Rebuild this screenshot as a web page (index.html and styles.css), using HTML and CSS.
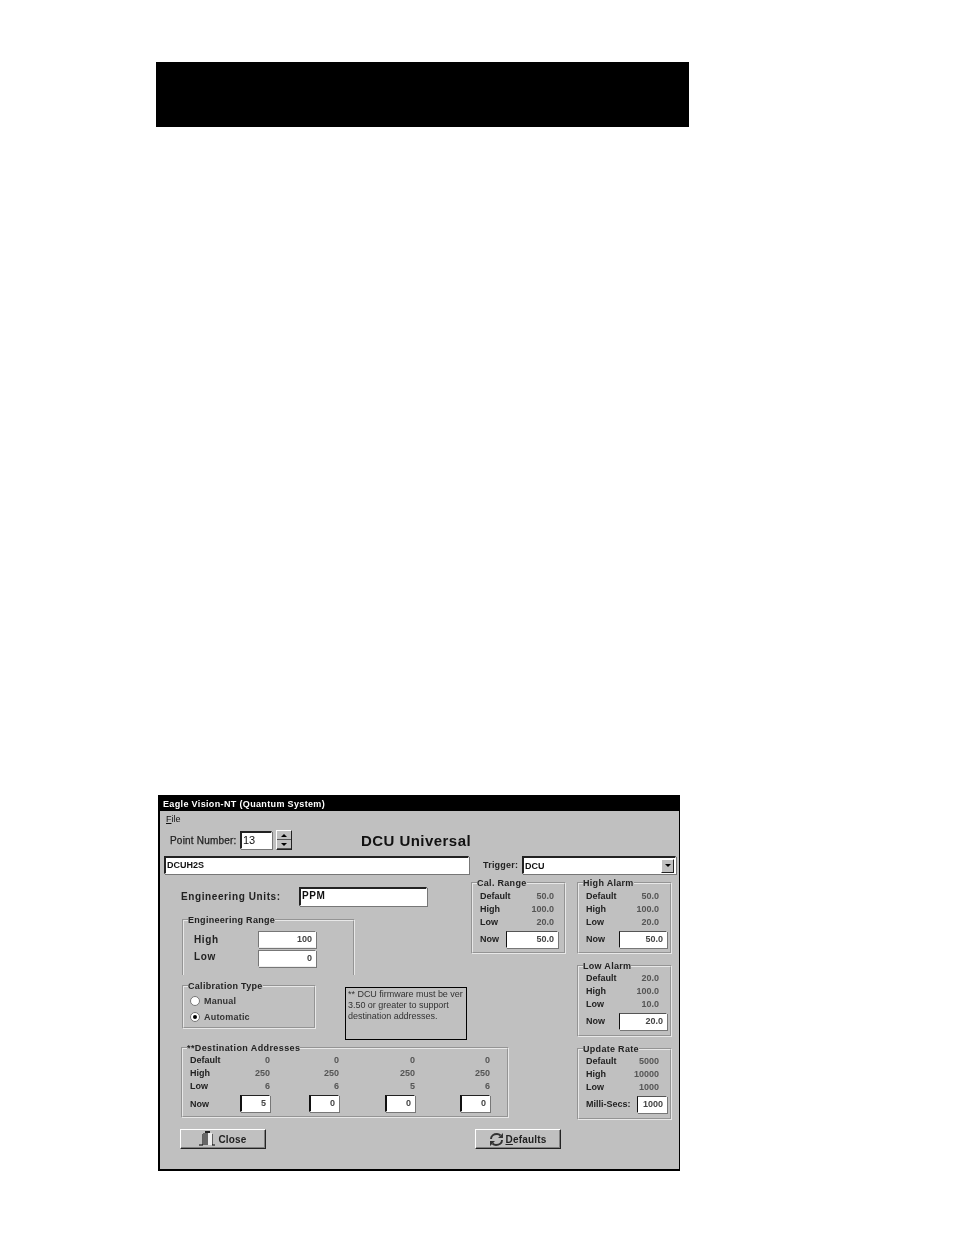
FILE: index.html
```html
<!DOCTYPE html>
<html lang="en">
<head>
    <meta charset="UTF-8">
    <title>Eagle Vision-NT (Quantum System)</title>
    <link rel="stylesheet" href="styles.css">
</head>
<body>
    <div class="page-header"></div>

    <div class="window">
        <div class="title-bar">Eagle Vision-NT (Quantum System)</div>
        <div class="menu-bar"><u>F</u>ile</div>

        <div class="form">
            <!-- Point number and heading -->
            <div class="point-row">
                <span class="label point-label">Point Number:</span>
                <div class="input point-input">13</div>
                <div class="spinner">
                    <div class="spin-btn"><span class="arrow-up"></span></div>
                    <div class="spin-btn"><span class="arrow-down"></span></div>
                </div>
                <h1 class="heading">DCU Universal</h1>
            </div>

            <div class="name-row">
                <div class="input name-input">DCUH2S</div>
                <span class="label trigger-label">Trigger:</span>
                <div class="input trigger-select">
                    <span>DCU</span>
                    <div class="drop-btn"><span class="arrow-down"></span></div>
                </div>
            </div>

            <div class="columns">
                <div class="left-group">
                    <div class="top-part">
                        <div class="left-col">
                            <div class="units-row">
                                <span class="label big units-label">Engineering Units:</span>
                                <div class="input units-input">PPM</div>
                            </div>

                            <fieldset class="box range-box">
                                <legend>Engineering Range</legend>
                                <div class="range-row">
                                    <span class="label big">High</span>
                                    <div class="input num range-input">100</div>
                                </div>
                                <div class="range-row">
                                    <span class="label big">Low</span>
                                    <div class="input num range-input">0</div>
                                </div>
                            </fieldset>

                            <div class="cal-row">
                                <fieldset class="box cal-box">
                                    <legend>Calibration Type</legend>
                                    <div class="radio-row"><span class="radio"></span>Manual</div>
                                    <div class="radio-row"><span class="radio on"></span>Automatic</div>
                                </fieldset>
                                <div class="note">** DCU firmware must be ver 3.50 or greater to support destination addresses.</div>
                            </div>
                        </div>

                        <fieldset class="box stat-box cal-range">
                            <legend>Cal. Range</legend>
                            <div class="stat"><b>Default</b><span>50.0</span></div>
                            <div class="stat"><b>High</b><span>100.0</span></div>
                            <div class="stat"><b>Low</b><span>20.0</span></div>
                            <div class="stat now"><b>Now</b><div class="input num">50.0</div></div>
                        </fieldset>
                    </div>

                    <fieldset class="box dest-box">
                        <legend>**Destination Addresses</legend>
                        <div class="dest-grid">
                            <b>Default</b><span>0</span><span>0</span><span>0</span><span>0</span>
                            <b>High</b><span>250</span><span>250</span><span>250</span><span>250</span>
                            <b>Low</b><span>6</span><span>6</span><span>5</span><span>6</span>
                            <b class="dest-now">Now</b>
                            <div class="input num">5</div>
                            <div class="input num">0</div>
                            <div class="input num">0</div>
                            <div class="input num">0</div>
                        </div>
                    </fieldset>
                </div>

                <div class="right-col">
                    <fieldset class="box stat-box">
                        <legend>High Alarm</legend>
                        <div class="stat"><b>Default</b><span>50.0</span></div>
                        <div class="stat"><b>High</b><span>100.0</span></div>
                        <div class="stat"><b>Low</b><span>20.0</span></div>
                        <div class="stat now"><b>Now</b><div class="input num">50.0</div></div>
                    </fieldset>
                    <fieldset class="box stat-box">
                        <legend>Low Alarm</legend>
                        <div class="stat"><b>Default</b><span>20.0</span></div>
                        <div class="stat"><b>High</b><span>100.0</span></div>
                        <div class="stat"><b>Low</b><span>10.0</span></div>
                        <div class="stat now"><b>Now</b><div class="input num">20.0</div></div>
                    </fieldset>
                    <fieldset class="box stat-box">
                        <legend>Update Rate</legend>
                        <div class="stat"><b>Default</b><span>5000</span></div>
                        <div class="stat"><b>High</b><span>10000</span></div>
                        <div class="stat"><b>Low</b><span>1000</span></div>
                        <div class="stat now"><b>Milli-Secs:</b><div class="input num short">1000</div></div>
                    </fieldset>
                </div>
            </div>

            <div class="button-row">
                <div class="button close-btn">
                    <svg width="16" height="17" viewBox="0 0 16 17">
                        <path d="M13 3v11h3M4 3v11H0" fill="none" stroke="#000" stroke-width="1"/>
                        <path d="M6 0h5v2H6z" fill="#222"/>
                        <rect x="4" y="2" width="5" height="12" fill="#666"/>
                        <rect x="9" y="2" width="4" height="12" fill="#eee"/>
                    </svg>
                    <span>Close</span>
                </div>
                <div class="button defaults-btn">
                    <svg width="15" height="15" viewBox="0 0 15 15">
                        <path d="M2 7C2 3.500 5 2 8 2c1.500 0 2.500.5 3.500 1.500" fill="none" stroke="#333" stroke-width="2"/>
                        <path d="M13 8c0 3.500-3 5-6 5-1.500 0-2.500-.5-3.500-1.500" fill="none" stroke="#333" stroke-width="2"/>
                        <path d="M14 1v5H9zM1 14V9h5z" fill="#333"/>
                    </svg>
                    <span><u>D</u>efaults</span>
                </div>
            </div>
        </div>
    </div>
</body>
</html>
```

FILE: styles.css
```css
* {
    box-sizing: border-box;
}

body {
    margin: 0;
    background: #fff;
    font-family: 'Liberation Sans', Arial, sans-serif;
    font-size: 9px;
    color: #111;
}

.page-header {
    width: 533px;
    height: 65px;
    margin: 62px 0 0 156px;
    background: #000;
}

.window {
    width: 522px;
    height: 376px;
    margin: 668px 0 0 158px;
    border: 2px solid #000;
    border-right-width: 1px;
    background: #c0c0c0;
    filter: blur(0.35px);
}

.title-bar {
    height: 14px;
    padding: 1px 0 0 3px;
    background: #000;
    color: #fff;
    font-weight: bold;
    letter-spacing: 0.35px;
    line-height: 13px;
}

.menu-bar {
    height: 19px;
    padding: 3px 0 0 6px;
    line-height: 11px;
}

.form {
    padding-left: 4px;
}

.label {
    font-weight: bold;
    letter-spacing: 0.2px;
    color: #222;
}

.big {
    font-size: 10px;
    letter-spacing: 0.6px;
}

.input {
    background: #fff;
    border: 1px solid #fff;
    border-top: 2px solid #222;
    border-left: 2px solid #222;
    box-shadow: 1px 1px 0 #777;
    font-weight: bold;
    line-height: 14px;
    white-space: nowrap;
    overflow: hidden;
}

.num {
    padding-right: 3px;
    border-top: 1px solid #555;
    border-left: 1px solid #111;
    text-align: right;
    color: #444;
}

.point-row {
    display: flex;
    align-items: center;
    height: 20px;
    padding-left: 6px;
}

.point-label {
    width: 70px;
    font-size: 10px;
    font-weight: normal;
    letter-spacing: 0.2px;
    -webkit-text-stroke: 0.25px #222;
}

.point-input {
    width: 32px;
    height: 18px;
    padding-left: 1px;
    font-size: 11px;
    font-weight: normal;
}

.spinner {
    display: flex;
    flex-direction: column;
    width: 16px;
    height: 20px;
    margin-left: 4px;
    border: 1px solid #222;
    border-top-color: #fff;
    border-left-color: #fff;
}

.spin-btn {
    flex: 1;
    display: flex;
    align-items: center;
    justify-content: center;
    border-bottom: 1px solid #555;
}

.arrow-up,
.arrow-down {
    width: 0;
    height: 0;
    border-left: 3px solid transparent;
    border-right: 3px solid transparent;
}

.arrow-up {
    border-bottom: 3px solid #000;
}

.arrow-down {
    border-top: 3px solid #000;
}

.heading {
    margin: 2px 0 0 69px;
    font-size: 15px;
    line-height: 20px;
    font-weight: bold;
    letter-spacing: 0.45px;
}

.name-row {
    display: flex;
    align-items: center;
    height: 18px;
    margin-top: 6px;
}

.name-input {
    width: 305px;
    height: 18px;
    padding-left: 1px;
}

.trigger-label {
    width: 39px;
    margin-left: 14px;
}

.trigger-select {
    display: flex;
    align-items: center;
    justify-content: space-between;
    width: 154px;
    height: 18px;
    padding-left: 1px;
}

.drop-btn {
    display: flex;
    align-items: center;
    justify-content: center;
    width: 13px;
    height: 14px;
    margin-right: 1px;
    background: #c0c0c0;
    border: 1px solid #222;
    border-top-color: #fff;
    border-left-color: #fff;
}

.columns {
    display: flex;
    gap: 11px;
    margin-top: 4px;
}

.left-group {
    width: 402px;
}

.top-part {
    display: flex;
    height: 163px;
}

.left-col {
    width: 307px;
    padding: 9px 0 0 17px;
}

.right-col {
    display: flex;
    flex-direction: column;
    gap: 7px;
    width: 95px;
}

/* group boxes, legend sits on the groove */
.box {
    margin: 0;
    padding: 0;
    min-width: 0;
    border: 2px groove #e8e8e8;
}

.box legend {
    margin-left: -3px;
    padding: 0;
    font-size: 9px;
    line-height: 10px;
    font-weight: bold;
    color: #222;
    letter-spacing: 0.3px;
}

.units-row {
    display: flex;
    align-items: center;
    height: 19px;
}

.units-label {
    width: 118px;
}

.units-input {
    width: 128px;
    height: 19px;
    padding-left: 1px;
    font-size: 10px;
    letter-spacing: 0.6px;
}

.range-box {
    width: 173px;
    height: 60px;
    margin: 9px 0 0 1px;
    padding: 6px 0 0 10px;
    border-bottom: none;
}

.range-box legend {
    margin-left: -6px;
}

.range-row {
    display: flex;
    align-items: center;
    height: 17px;
    margin-bottom: 2px;
}

.range-row .label {
    width: 64px;
}

.range-row + .range-row .label {
    margin-top: -4px;
}

.range-input {
    width: 58px;
    height: 17px;
    border-color: #fff #fff #eee #777;
    border-top-color: #777;
}

.cal-row {
    display: flex;
    height: 59px;
    margin: 6px 0 0 1px;
}

.cal-box {
    width: 134px;
    height: 48px;
    padding: 2px 0 0 6px;
}

.cal-box legend {
    margin-left: -2px;
}

.radio-row {
    display: flex;
    align-items: center;
    gap: 4px;
    height: 16px;
    font-weight: bold;
    letter-spacing: 0.2px;
    color: #333;
}

.radio {
    position: relative;
    width: 10px;
    height: 10px;
    background: #fff;
    border: 1px solid #777;
    border-radius: 50%;
}

.radio.on::after {
    content: "";
    position: absolute;
    top: 2px;
    left: 2px;
    width: 4px;
    height: 4px;
    background: #000;
    border-radius: 50%;
}

.note {
    width: 122px;
    height: 53px;
    margin: 6px 0 0 29px;
    padding: 1px 2px;
    border: 1px solid #000;
    font-size: 9px;
    line-height: 11px;
    letter-spacing: -0.03px;
    color: #333;
}

.stat-box {
    width: 95px;
    height: 76px;
    padding: 2px 3px 0 7px;
}

.stat-box + .stat-box {
    padding-top: 1px;
}

.stat {
    display: flex;
    justify-content: space-between;
    height: 13px;
    padding-right: 8px;
    line-height: 13px;
    color: #555;
    font-weight: bold;
}

.stat b {
    color: #222;
}

.stat.now {
    align-items: center;
    height: 17px;
    margin-top: 2px;
    padding-right: 0;
}

.stat.now .input {
    width: 48px;
    height: 17px;
}

.stat.now .short {
    width: 30px;
}

.cal-range .stat {
    padding-right: 7px;
}

.cal-range .stat.now {
    padding-right: 3px;
}

.cal-range .stat.now .input {
    width: 52px;
}

.dest-box {
    width: 328px;
    height: 75px;
    margin: 2px 0 0 17px;
    padding: 1px 0 0 7px;
}

.dest-box legend {
    letter-spacing: 0.4px;
}

.dest-grid {
    display: grid;
    grid-template-columns: 50px 30px 69px 76px 75px;
    grid-auto-rows: 13px;
    line-height: 13px;
    font-weight: bold;
    color: #555;
    text-align: right;
}

.dest-grid b {
    color: #222;
    text-align: left;
}

.dest-grid .input {
    width: 30px;
    height: 17px;
    margin-top: 2px;
    justify-self: end;
    border-top-color: #222;
    border-left-width: 2px;
}

.dest-now {
    margin-top: 3px;
    line-height: 17px;
}

.button-row {
    display: flex;
    margin: 9px 0 0 16px;
}

.button {
    display: flex;
    align-items: center;
    justify-content: center;
    gap: 3px;
    width: 86px;
    height: 20px;
    border: 1px solid #222;
    border-top-color: #fff;
    border-left-color: #fff;
    box-shadow: inset -1px -1px 0 #808080;
    font-weight: bold;
    font-size: 10px;
    letter-spacing: 0.2px;
    color: #222;
}

.defaults-btn {
    margin-left: 209px;
    gap: 1px;
}
```
